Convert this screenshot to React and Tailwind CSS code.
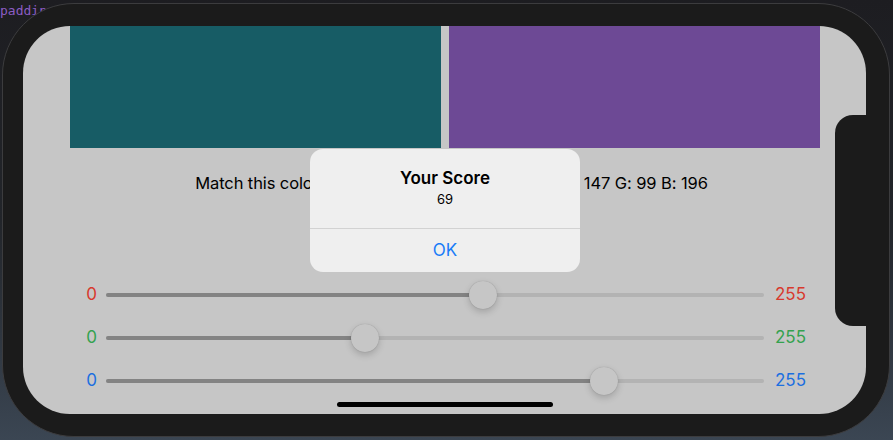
import React from 'react';

const sliders = [
  { value: 147, color: 'text-[#d8392d]' },
  { value: 99, color: 'text-[#34a24f]' },
  { value: 196, color: 'text-[#1b6fe0]' },
];

function Slider({ value, color }) {
  // track is 658px, thumb 28px
  const left = (value / 255) * 630;
  return (
    <div className="flex items-center h-[28px]">
      <span className={`w-[83px] pr-[9px] text-right text-[17px] ${color}`}>0</span>
      <div className="relative w-[658px] h-[4px] rounded-full bg-[#b3b3b3]">
        <div className="absolute left-0 top-0 h-[4px] rounded-full bg-[#838383]" style={{ width: left + 14 }} />
        <div
          className="absolute top-[-12px] w-[28px] h-[28px] rounded-full bg-[#c6c6c6] shadow-[0_3px_7px_rgba(0,0,0,0.18),0_0_1px_rgba(0,0,0,0.25)]"
          style={{ left }}
        />
      </div>
      <span className={`pl-[11px] text-[17px] ${color}`}>255</span>
    </div>
  );
}

export default function App() {
  return (
    <div className="relative w-[893px] h-[440px] overflow-hidden bg-gradient-to-b from-[#1d1d21] via-[#22252a] to-[#3b4653] font-['Inter',sans-serif]">
      <span className="absolute left-0 top-[1px] font-['DejaVu_Sans_Mono',monospace] text-[13px] text-[#8c5cc4]">padding</span>
      <div className="relative mt-[3px] ml-[2px] w-[888px] h-[434px] rounded-[72px] bg-[#1b1b1b] border border-[#3c3c3e] pl-[20px] pt-[22px]">
        <div className="relative w-[843px] h-[388px] rounded-[47px] bg-[#c6c6c6] overflow-hidden">
          {/* notch */}
          <div className="absolute right-0 top-[89px] w-[31px] h-[211px] rounded-l-[18px] bg-[#1b1b1b]" />

          <div className="flex gap-[8px] pl-[47px] h-[122px]">
            <div className="w-[371px] bg-[#175c65]" />
            <div className="w-[371px] bg-[#6d4995]" />
          </div>

          <p className="mt-[25px] pl-[14px] text-center text-[16.5px] tracking-[-0.1px] leading-[20px] text-black">
            Match this color by moving the sliders. Current: R: 147 G: 99 B: 196
          </p>

          <div className="mt-[88px] flex flex-col gap-[15px]">
            {sliders.map((s, i) => (
              <Slider key={i} {...s} />
            ))}
          </div>

          <div className="absolute left-[314px] bottom-[7px] w-[216px] h-[5px] rounded-full bg-black" />

          {/* alert */}
          <div className="absolute left-[287px] top-[123px] w-[270px] rounded-[13px] bg-[#efefef] text-center">
            <div className="pt-[18px] pb-[21px]">
              <div className="text-[17px] leading-[22px] font-semibold text-black">Your Score</div>
              <div className="mt-[2px] text-[13px] leading-[16px] text-black">69</div>
            </div>
            <div className="h-[44px] border-t border-[#d2d2d2] flex items-center justify-center text-[17px] text-[#1a7cf8]">
              OK
            </div>
          </div>
        </div>
      </div>
    </div>
  );
}
